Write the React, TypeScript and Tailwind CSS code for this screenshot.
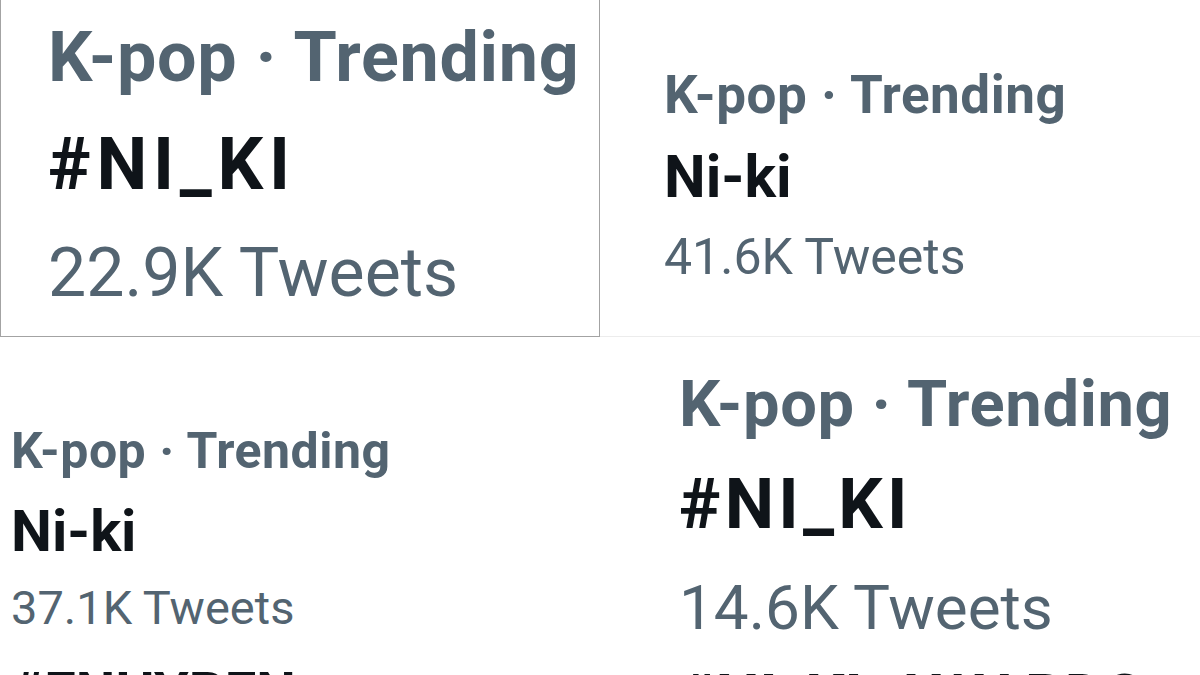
import React from "react";

const font = { fontFamily: "Roboto, 'Liberation Sans', Arial, sans-serif" };

export default function App() {
  return (
    <div className="w-[1200px] h-[675px] bg-white overflow-hidden grid grid-cols-[600px_600px] grid-rows-[337px_338px]" style={font}>
      {/* Top-left */}
      <div className="overflow-hidden border-l border-r border-b border-[#a3a3a3] pl-[47px] pt-[3px]">
        <div className="text-[70px] leading-[108px] font-bold text-[#536471] whitespace-nowrap tracking-[0.01em]">K-pop · Trending</div>
        <div className="text-[72px] leading-[108px] font-bold text-[#0f1419] whitespace-nowrap tracking-[0.08em]">#NI_KI</div>
        <div className="text-[68px] leading-[108px] text-[#536471] whitespace-nowrap">22.9K Tweets</div>
      </div>
      {/* Top-right */}
      <div className="overflow-hidden border-b border-[#ececec] pl-[64px] pt-[53px]">
        <div className="text-[53px] leading-[84px] font-bold text-[#536471] whitespace-nowrap tracking-[0.01em]">K-pop · Trending</div>
        <div className="text-[59px] leading-[80px] font-bold text-[#0f1419] whitespace-nowrap">Ni-ki</div>
        <div className="text-[50px] leading-[80px] text-[#536471] whitespace-nowrap">41.6K Tweets</div>
      </div>
      {/* Bottom-left */}
      <div className="overflow-hidden pl-[11px] pt-[73px]">
        <div className="text-[50px] leading-[82px] font-bold text-[#536471] whitespace-nowrap tracking-[0.01em]">K-pop · Trending</div>
        <div className="text-[58px] leading-[78px] font-bold text-[#0f1419] whitespace-nowrap">Ni-ki</div>
        <div className="text-[47px] leading-[76px] text-[#536471] whitespace-nowrap">37.1K Tweets</div>
        <div className="mt-[8px] text-[56px] leading-[78px] font-bold text-[#0f1419] whitespace-nowrap">#ENHYPEN</div>
      </div>
      {/* Bottom-right */}
      <div className="overflow-hidden pl-[79px] pt-[17px]">
        <div className="text-[65px] leading-[100px] font-bold text-[#536471] whitespace-nowrap tracking-[0.01em]">K-pop · Trending</div>
        <div className="text-[70px] leading-[100px] font-bold text-[#0f1419] whitespace-nowrap tracking-[0.06em]">#NI_KI</div>
        <div className="mt-[4px] text-[62px] leading-[100px] text-[#536471] whitespace-nowrap">14.6K Tweets</div>
        <div className="-mt-[11px] text-[62px] leading-[100px] font-bold text-[#0f1419] whitespace-nowrap">#NI_KI_AWARDS</div>
      </div>
    </div>
  );
}
